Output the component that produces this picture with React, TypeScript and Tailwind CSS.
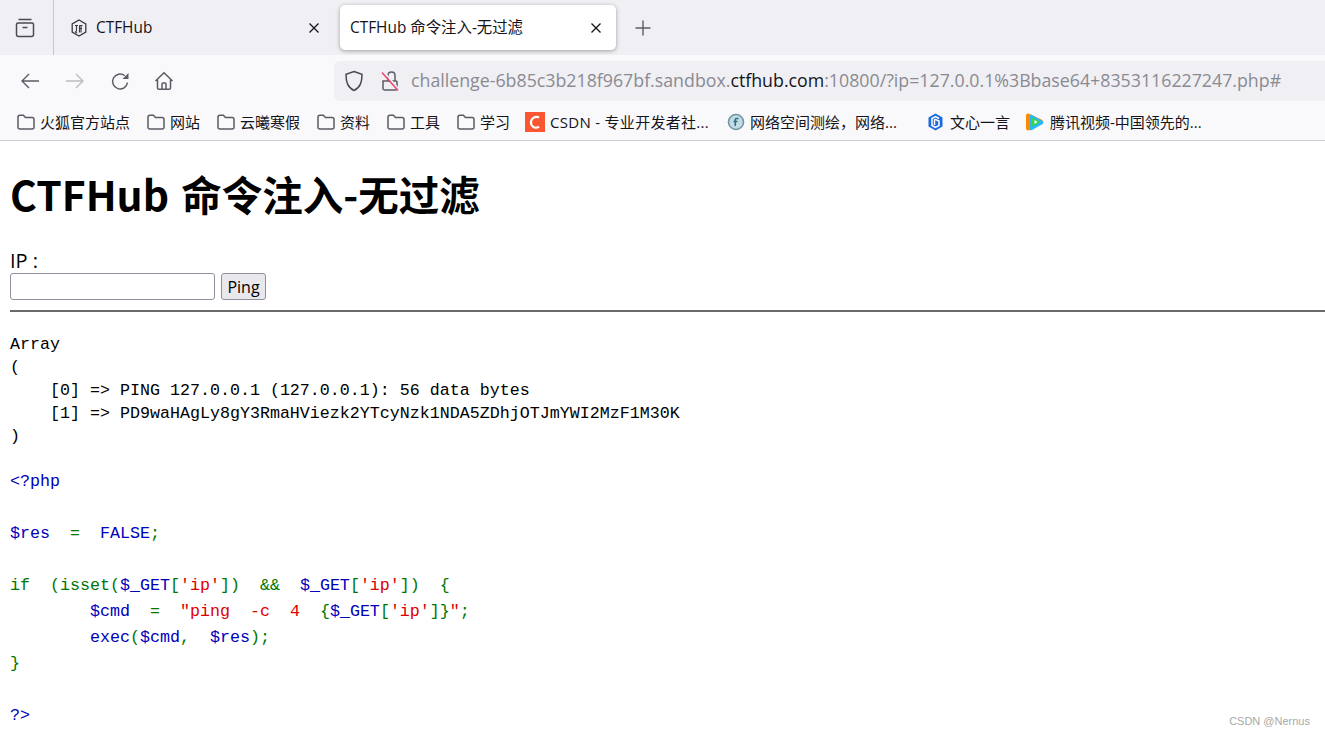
const uiFont = "font-['Open_Sans','Noto_Sans_CJK_SC',sans-serif]";

function CloseIcon() {
  return (
    <svg width="12" height="12" viewBox="0 0 12 12" className="shrink-0" fill="none" stroke="#15141a" strokeWidth="1.3">
      <path d="M1.5 1.5l9 9M10.5 1.5l-9 9" />
    </svg>
  );
}

function FolderIcon() {
  return (
    <svg width="18" height="16" viewBox="0 0 18 16" className="shrink-0" fill="none" stroke="#5b5b66" strokeWidth="1.5">
      <path d="M1 3.2C1 2 1.8 1.2 3 1.2h3.4l2 2.2H15c1.2 0 2 .8 2 2v7.6c0 1.2-.8 2-2 2H3c-1.2 0-2-.8-2-2z" />
    </svg>
  );
}

function HubIcon() {
  return (
    <svg width="16" height="18" viewBox="0 0 16 18" fill="none" stroke="#3a3a3f" strokeWidth="1.3">
      <path d="M8 1l6.8 3.9v8.2L8 17l-6.8-3.9V4.900z" />
      <path d="M4 6.500h3M5.500 6.500v6M8.500 6.500h3M10 6.500v7M4 12.500l2 1.500M8.500 9.500h2.500M8.500 6.500v7" strokeWidth="1.100" />
    </svg>
  );
}

function Bookmark({ w, icon, label, tight }: { w: string; icon: React.ReactNode; label: string; tight?: boolean }) {
  return (
    <div className={`flex shrink-0 items-center gap-[5px] ${w}`}>
      {icon}
      <span className={`whitespace-nowrap text-[15px] leading-5 text-[#15141a] ${tight ? "tracking-[0.3px]" : ""}`}>{label}</span>
    </div>
  );
}

const G = ({ children }: { children: React.ReactNode }) => <span className="text-[#007700]">{children}</span>;
const B = ({ children }: { children: React.ReactNode }) => <span className="text-[#0000bb]">{children}</span>;
const R = ({ children }: { children: React.ReactNode }) => <span className="text-[#dd0000]">{children}</span>;

export default function App() {
  return (
    <div className="relative h-[736px] w-[1325px] overflow-hidden bg-white text-black">
      <div className={uiFont}>
        {/* tab strip */}
        <div className="flex h-[55px] items-center bg-[#f0f0f4]">
          <div className="flex h-full w-[54px] shrink-0 items-center border-r border-[#c6c6cc] pl-[15px]">
            <svg width="20" height="20" viewBox="0 0 20 20" fill="none" stroke="#4a4a52" strokeWidth="1.5">
              <path d="M3.500 1.500h13M1.500 6.500c0-.8.7-1.500 1.500-1.500h14c.8 0 1.500.7 1.500 1.500v10c0 1-.8 2-2 2h-13c-1.200 0-2-1-2-2z" />
              <path d="M7.500 9.500h5" />
            </svg>
          </div>
          <div className="flex h-[45px] w-[286px] shrink-0 items-center pl-[17px] pr-[20px]">
            <HubIcon />
            <span className="ml-[9px] flex-1 text-[15.4px] text-[#15141a]">CTFHub</span>
            <CloseIcon />
          </div>
          <div className="flex h-[45px] w-[276px] shrink-0 items-center rounded-[5px] bg-white pl-[10px] pr-[14px] shadow-[0_1px_4px_rgba(0,0,0,0.35)]">
            <span className="flex-1 text-[15.4px] text-[#15141a]">CTFHub 命令注入-无过滤</span>
            <CloseIcon />
          </div>
          <svg width="16" height="16" viewBox="0 0 16 16" className="ml-[19px]" fill="none" stroke="#5b5b66" strokeWidth="1.4">
            <path d="M8 .5v15M.5 8h15" />
          </svg>
        </div>

        {/* nav bar */}
        <div className="flex h-[51px] items-center bg-[#f9f9fb]">
          <div className="flex w-[334px] shrink-0 items-center pl-[20px]">
            <svg width="20" height="18" viewBox="0 0 20 18" fill="none" stroke="#5b5b66" strokeWidth="1.4">
              <path d="M19 9H2M9 2L2 9l7 7" />
            </svg>
            <svg width="20" height="18" viewBox="0 0 20 18" className="ml-[25px]" fill="none" stroke="#bcbcc1" strokeWidth="1.4">
              <path d="M1 9h17M11 2l7 7-7 7" />
            </svg>
            <svg width="20" height="20" viewBox="0 0 20 20" className="ml-[25px]" fill="none" stroke="#5b5b66" strokeWidth="1.500">
              <path d="M17.500 11.500a7.500 7.500 0 1 1-2.800-6.900" />
              <path d="M18.500 2v6H12.500z" fill="#5b5b66" stroke="none" />
            </svg>
            <svg width="20" height="20" viewBox="0 0 20 20" className="ml-[24px]" fill="none" stroke="#5b5b66" strokeWidth="1.500">
              <path d="M1.500 10L10 1.800 18.500 10M3.500 8.500V17c0 .8.500 1.300 1.300 1.300h10.400c.8 0 1.300-.5 1.300-1.300V8.500M8 18v-5c0-.6.400-1 1-1h2c.6 0 1 .4 1 1v5" />
            </svg>
          </div>
          <div className="flex h-10 flex-1 items-center rounded-l-[6px] bg-[#f0f0f4] pl-[10px]">
            <svg width="20" height="22" viewBox="0 0 20 22" fill="none" stroke="#4a4a52" strokeWidth="1.500">
              <path d="M10 1.500l8 2.700c0 8-1.600 13-8 16.300C3.600 17.200 2 12.200 2 4.200z" />
            </svg>
            <svg width="20" height="22" viewBox="0 0 20 22" className="ml-[16px]" fill="none">
              <path d="M3 11h13c.6 0 1 .4 1 1v6.500c0 .8-.6 1.400-1.400 1.400H4.400C3.600 19.900 3 19.300 3 18.500zM8 11V5.500C8 3.500 9.500 2 11.500 2S15 3.500 15 5.500V11" stroke="#5b5b66" strokeWidth="1.500" />
              <path d="M3.500 1.500l15.500 18" stroke="#f0f0f4" strokeWidth="1.800" />
              <path d="M2 2.500l16 18" stroke="#f0426a" strokeWidth="1.500" />
            </svg>
            <span className="ml-[11px] whitespace-nowrap text-[17.77px] text-[#8a8a92]">
              challenge-6b85c3b218f967bf.sandbox.<span className="text-[#15141a]">ctfhub.com</span>:10800/?ip=127.0.0.1%3Bbase64+8353116227247.php#
            </span>
          </div>
        </div>

        {/* bookmarks */}
        <div className="flex h-[35px] items-center border-b border-[#cfcfd8] bg-[#f9f9fb] pb-[2px] pl-[17px]">
          <Bookmark w="w-[130px]" icon={<FolderIcon />} label="火狐官方站点" />
          <Bookmark w="w-[70px]" icon={<FolderIcon />} label="网站" />
          <Bookmark w="w-[100px]" icon={<FolderIcon />} label="云曦寒假" />
          <Bookmark w="w-[70px]" icon={<FolderIcon />} label="资料" />
          <Bookmark w="w-[70px]" icon={<FolderIcon />} label="工具" />
          <Bookmark w="w-[68px]" icon={<FolderIcon />} label="学习" />
          <Bookmark
            w="w-[202px]"
            tight
            icon={
              <svg width="20" height="20" viewBox="0 0 20 20">
                <rect width="20" height="20" fill="#fc5531" />
                <path d="M14 5.500A5.500 5.500 0 0 0 6 9.500v1.500a5 5 0 0 0 8 3.700" fill="none" stroke="#fff" strokeWidth="2.200" />
              </svg>
            }
            label="CSDN - 专业开发者社..."
          />
          <Bookmark
            w="w-[199px]"
            icon={
              <svg width="18" height="20" viewBox="0 0 18 20" fill="none">
                <circle cx="9" cy="10" r="7.500" fill="#c3dbe2" stroke="#6f97a6" strokeWidth="1.600" />
                <path d="M11.500 6.500H9.500C8.700 6.500 8.300 7 8.300 7.800V14M6.500 9.500h4" stroke="#2f6a87" strokeWidth="1.500" />
              </svg>
            }
            label="网络空间测绘，网络..."
          />
          <Bookmark
            w="w-[99px]"
            icon={
              <svg width="19" height="20" viewBox="0 0 18 20" fill="none">
                <path d="M9 1.500l7 4v9l-7 4-7-4v-9z" fill="#1c6be0" />
                <path d="M12.500 6.500L9 4.500l-3.500 2v7L9 15.500l3.500-2V9L9 7.500 8 8v5" stroke="#fff" strokeWidth="1.500" />
              </svg>
            }
            label="文心一言"
          />
          <Bookmark
            w="w-[220px]"
            icon={
              <svg width="20" height="20" viewBox="0 0 20 20">
                <path d="M1 3.500C1 2 2.500 1 4 1.800l13 6c1.600 1 1.600 3.400 0 4.400l-13 6C2.500 19 1 18 1 16.500z" fill="#ff8a00" />
                <path d="M5 4c0-1 1-1.600 2-1l10.500 6c1.300.8 1.300 2.200 0 3L7 18c-1 .6-2 0-2-1z" fill="#23b8ff" />
                <path d="M7 6.500c0-.6.600-1 1.100-.6l6.400 3.500c.6.400.6 1 0 1.400l-6.400 3.500c-.5.300-1.100 0-1.100-.6z" fill="#3bd24a" />
                <path d="M9.500 8v4l3-2z" fill="#fff" />
              </svg>
            }
            label="腾讯视频-中国领先的..."
          />
        </div>
      </div>

      {/* page content */}
      <div className="pl-[10px]">
        <h1 className="mt-[23px] whitespace-nowrap font-['Noto_Sans_CJK_SC',sans-serif] text-[40.9px] font-bold leading-[60px]">
          CTFHub <span className="ml-[3px] text-[40.5px]">命令注入-无过滤</span>
        </h1>
        <div className={`mt-[24px] text-[20px] leading-[25px] ${uiFont}`}>IP :</div>
        <div className="flex items-stretch">
          <input className="h-[27px] w-[205px] rounded-[3px] border border-[#8f8f9d] bg-white" />
          <button className="ml-[6px] h-[27px] w-[45px] rounded-[3px] border border-[#8f8f9d] bg-[#e9e9ed] pt-[1px] text-[16px] font-['Open_Sans',sans-serif]">
            Ping
          </button>
        </div>
        <hr className="mt-[10px] border-t-2 border-[#6a6a6a]" />

        <div className="mt-[21px] whitespace-pre font-['Liberation_Mono',monospace] text-[16.67px]">
          <div className="leading-[23px]">
            {"Array\n(\n    [0] => PING 127.0.0.1 (127.0.0.1): 56 data bytes\n    [1] => PD9waHAgLy8gY3RmaHViezk2YTcyNzk1NDA5ZDhjOTJmYWI2MzF1M30K\n)\n\n"}
          </div>
          <div className="-mt-[2px] leading-[26px]">
            <div><B>{"<?php"}</B></div>
            <div>{" "}</div>
            <div><B>$res</B>{"  "}<G>=</G>{"  "}<B>FALSE</B><G>;</G></div>
            <div>{" "}</div>
            <div>
              <G>if  (isset(</G><B>$_GET</B><G>[</G><R>'ip'</R><G>])  &&  </G><B>$_GET</B><G>[</G><R>'ip'</R><G>])  {"{"}</G>
            </div>
            <div>
              {"        "}<B>$cmd</B>{"  "}<G>=</G>{"  "}<R>"ping  -c  4  </R><G>{"{"}</G><B>$_GET</B><G>[</G><R>'ip'</R><G>]{"}"}</G><R>"</R><G>;</G>
            </div>
            <div>
              {"        "}<B>exec</B><G>(</G><B>$cmd</B><G>,  </G><B>$res</B><G>);</G>
            </div>
            <div><G>{"}"}</G></div>
            <div>{" "}</div>
            <div><B>{"?>"}</B></div>
          </div>
        </div>
      </div>

      <span className="absolute bottom-[7px] right-[15px] font-['Liberation_Sans',sans-serif] text-[11px] text-[#a8a8a8]">CSDN @Nernus</span>
    </div>
  );
}
